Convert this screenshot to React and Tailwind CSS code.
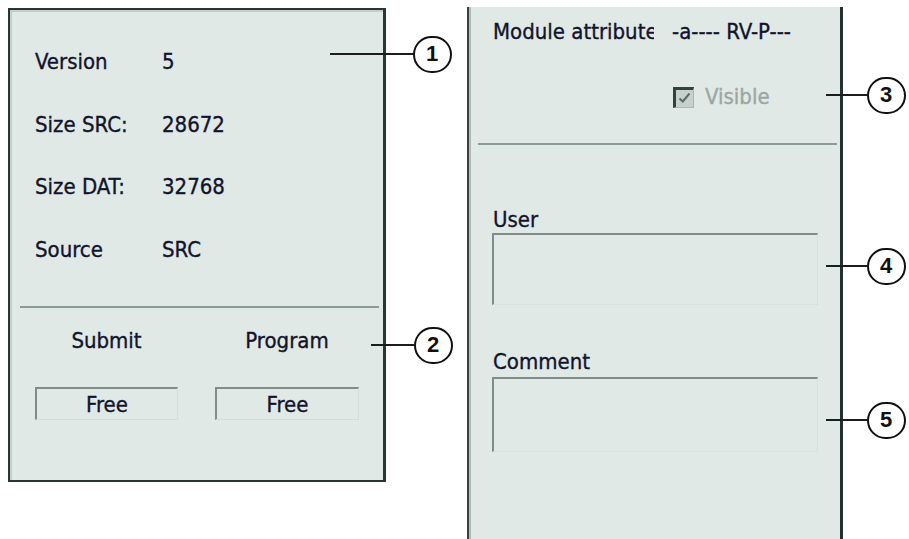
import React from "react";

const FONT = "font-['DejaVu_Sans_Condensed','DejaVu_Sans',sans-serif]";

function Callout({ lineLeft, lineRight, y, cx, n }) {
  return (
    <>
      <div
        className="absolute h-[2px] bg-[#1c1c1c]"
        style={{ left: lineLeft, width: lineRight - lineLeft, top: y - 1 }}
      />
      <div
        className="absolute w-[39px] h-[37px] rounded-full border-2 border-[#111] bg-white flex items-center justify-center"
        style={{ left: cx - 19.5, top: y - 18.5 }}
      >
        <span className="font-['Liberation_Sans',Arial,sans-serif] font-bold text-[22px] leading-none text-[#111] [-webkit-text-stroke-width:0px]">
          {n}
        </span>
      </div>
    </>
  );
}

function Row({ label, value }) {
  return (
    <div className="flex h-[26px] items-center leading-[26px]">
      <span className="w-[127px]">{label}</span>
      <span>{value}</span>
    </div>
  );
}

function FreeBox() {
  return (
    <div className="h-[33px] pt-[2px] border-t-2 border-l-2 border-r border-b border-t-[#7f8d8a] border-l-[#7f8d8a] border-r-[#d5ddda] border-b-[#d5ddda] flex items-center justify-center leading-[26px]">
      Free
    </div>
  );
}

function InputBox({ h }) {
  return (
    <div
      className="ml-[23px] w-[326px] border-t-2 border-l-2 border-r border-b border-t-[#7f8d8a] border-l-[#7f8d8a] border-r-[#d8e0dd] border-b-[#d8e0dd]"
      style={{ height: h }}
    />
  );
}

export default function App() {
  return (
    <div className={`relative w-[909px] h-[539px] overflow-hidden bg-white text-[22px] text-[#12142c] [-webkit-text-stroke-width:0.35px] ${FONT}`}>
      <div className="flex items-start">
        {/* Left panel */}
        <div className="ml-[8px] mt-[8px] w-[378px] h-[474px] bg-[#e1e9e6] border-2 border-r-[3px] border-[#2b3533] shadow-[inset_2px_2px_0_#c3ceca] flex flex-col">
          <div className="pt-[39px] pl-[25px] flex flex-col gap-[36.5px]">
            <Row label="Version" value="5" />
            <Row label="Size SRC:" value="28672" />
            <Row label="Size DAT:" value="32768" />
            <Row label="Source" value="SRC" />
          </div>
          <div className="mt-[43.5px] ml-[10px] w-[359px] h-[2px] bg-[#8c9a97]" />
          <div className="mt-[20px] pl-[25px] grid grid-cols-[143px_144px] gap-x-[37px]">
            <div className="h-[26px] leading-[26px] text-center">Submit</div>
            <div className="h-[26px] leading-[26px] text-center">Program</div>
            <div className="mt-[32.6px]">
              <FreeBox />
            </div>
            <div className="mt-[32.6px]">
              <FreeBox />
            </div>
          </div>
        </div>

        {/* Right panel */}
        <div className="ml-[81px] mt-[7px] w-[376px] h-[540px] bg-[#e1e9e6] border-l-2 border-r-[3px] border-l-[#3a4240] border-r-[#243030] shadow-[inset_2px_0_0_#b3beba] flex flex-col">
          <div className="mt-[12.4px] ml-[24px] flex h-[26px] leading-[26px] whitespace-nowrap">
            <span className="w-[161px] overflow-hidden">Module attribute</span>
            <span className="ml-[18px]">-a---- RV-P---</span>
          </div>
          <div className="mt-[39px] ml-[204px] flex h-[26px] items-center">
            <div className="w-[21px] h-[21px] bg-[#c6d1ce] border-t-[3px] border-l-[3px] border-r border-b border-t-[#33403d] border-l-[#33403d] border-r-[#aab6b3] border-b-[#aab6b3] flex items-center justify-center">
              <svg width="13" height="12" viewBox="0 0 13 12">
                <path d="M1.5 6.5 L4.8 9.5 L11.5 1.5" fill="none" stroke="#5d6b68" strokeWidth="2" />
              </svg>
            </div>
            <span className="ml-[11px] leading-[26px] text-[#9aa6a3]">Visible</span>
          </div>
          <div className="mt-[32.6px] ml-[9px] w-[359px] h-[2px] bg-[#8c9a97]" />
          <div className="mt-[62px] ml-[24px] h-[26px] leading-[26px]">User</div>
          <InputBox h={72} />
          <div className="mt-[44.5px] ml-[24px] h-[26px] leading-[26px]">Comment</div>
          <div className="mt-[1.5px]">
            <InputBox h={75} />
          </div>
        </div>
      </div>

      {/* Callouts */}
      <Callout lineLeft={330} lineRight={414} y={54} cx={432} n="1" />
      <Callout lineLeft={371} lineRight={414} y={345} cx={433} n="2" />
      <Callout lineLeft={826} lineRight={867} y={95} cx={886} n="3" />
      <Callout lineLeft={826} lineRight={867} y={266} cx={886} n="4" />
      <Callout lineLeft={826} lineRight={867} y={420} cx={886} n="5" />
    </div>
  );
}
